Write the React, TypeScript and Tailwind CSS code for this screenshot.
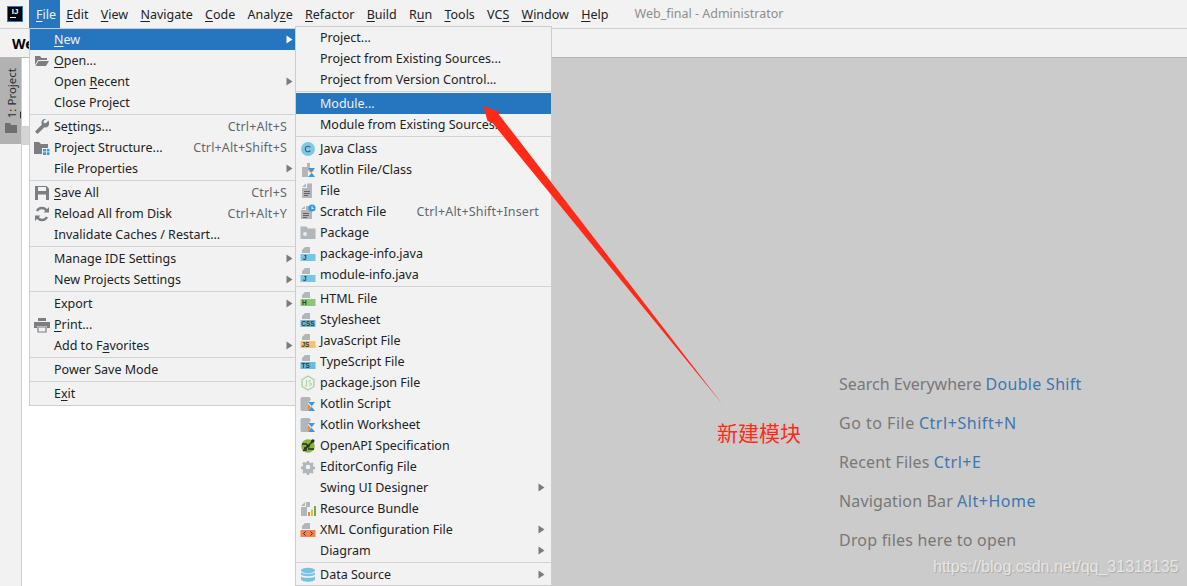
import React from "react";

const FONT = "font-['Noto_Sans','Open_Sans',sans-serif]";

function Label({ t }: { t: string }) {
  const i = t.indexOf("&");
  if (i < 0) return <>{t}</>;
  return (
    <>
      {t.slice(0, i)}
      <u className="underline underline-offset-[2px] decoration-1">{t[i + 1]}</u>
      {t.slice(i + 2)}
    </>
  );
}

const Svg = ({ children }: { children: React.ReactNode }) => (
  <svg width="16" height="16" viewBox="0 0 16 16" className="block">{children}</svg>
);

const G = "#7c7f82";
const L = "#b0b6ba";

const Lines = () => <path d="M4 8h6v1H4zM4 10h6v1H4zM4 12h4v1H4z" fill="#5f6468" />;
const TopDoc = () => <path d="M5 1h5v6H2V4zM5 1v3H2z" fill={L} />;
const Band = ({ c, t, tc = "#30383d", x = 3 }: { c: string; t: string; tc?: string; x?: number }) => (
  <>
    <TopDoc />
    <rect x="0.5" y="8" width="15" height="7" fill={c} />
    <text x={x} y="14.4" fontSize="6.5" fontWeight="700" fontFamily="Liberation Sans" fill={tc}>{t}</text>
  </>
);
const KotlinMark = () => <path d="M8 15l4-4.5L8 6h7l-3.5 4.5L15 15z" fill="#2f9be8" />;

const icons: Record<string, React.ReactNode> = {
  open: <Svg><path d="M1 3h5l1.5 2H13v2H4L1 12z" fill={G} /><path d="M4.5 8H15l-3 5H1.5z" fill={G} /></Svg>,
  wrench: <Svg><path d="M14.5 1.5l-2.8 2.8-1.800-.4-.4-1.800L12.200 0c-2.600-.7-5.200 1.400-4.700 4.300.1.500.2.900.4 1.200L1 12.400 3.600 15 10.400 8.200c3 1.100 6-1.700 4.100-6.700z" fill={G} /></Svg>,
  structure: <Svg><path d="M0 2h5l2 2h7v4H8v6H0z" fill={G} /><path d="M9 9h3v2.500H9zM12.800 9H15.500v2.500H12.800zM9 12.300h3V15H9zM12.800 12.300H15.500V15H12.800z" fill="#389fd6" /></Svg>,
  save: <Svg><path d="M1 1h11.500L15 3.500V15H1z" fill={G} /><rect x="4" y="2" width="8" height="4" fill="#f2f2f2" /><rect x="4" y="9.500" width="8" height="5.500" fill="#f2f2f2" /></Svg>,
  reload: <Svg><g fill="none" stroke={G} strokeWidth="2.400"><path d="M13 5.500A5.500 5.500 0 0 0 3 5" /><path d="M3 10.500A5.500 5.500 0 0 0 13 11" /></g><path d="M9.500 6.500H15V1zM6.500 9.500H1V15z" fill={G} /></Svg>,
  print: <Svg><rect x="4" y="1" width="8" height="3" fill={G} /><path d="M0 5h16v6h-3V9H3v2H0z" fill={G} /><path d="M4 10h8v5H4z" fill="none" stroke={G} strokeWidth="1.200" /></Svg>,
  java: <Svg><circle cx="8" cy="8" r="7" fill="#7ec8e6" /><path d="M10.300 6.300A2.800 2.800 0 1 0 10.300 9.700" fill="none" stroke="#3f5f6e" strokeWidth="1.100" /></Svg>,
  kotlin: <Svg><path d="M2 5h5V1h3v7H8v7H2z" fill={L} /><path d="M8 15l3-4-3-3h6l-3 3z" fill="#f0862f" /><KotlinMark /></Svg>,
  file: <Svg><path d="M7 0.500h5V15H2V5h5z" fill={L} /><path d="M2 4l4-3.500V4z" fill={L} /><Lines /></Svg>,
  scratch: <Svg><path d="M6 2h4v2h2v11H1V6h5z" fill={L} /><path d="M1 5l4-3v3z" fill={L} /><path d="M3 9h6v1H3zM3 11h6v1H3zM3 13h4v1H3z" fill="#5f6468" /><circle cx="12" cy="4" r="3.600" fill="#2f9be8" /><path d="M11.600 2.200h.9v2h1.400v.9h-2.300z" fill="#fff" /></Svg>,
  pkg: <Svg><path d="M0.500 1.500h6l1.500 2h7.500V14H0.500z" fill={L} /><circle cx="5" cy="9" r="2" fill="#e8ebec" /></Svg>,
  jfile: <Svg><Band c="#78c6e6" t="J" x={3} /></Svg>,
  html: <Svg><Band c="#8fc476" t="H" x={2} /></Svg>,
  css: <Svg><Band c="#6cbce0" t="CSS" x={1.200} /></Svg>,
  js: <Svg><Band c="#f4c36e" t="JS" x={1.500} /></Svg>,
  ts: <Svg><Band c="#66bce3" t="TS" x={1.500} /></Svg>,
  node: <Svg><path d="M8 1l6 3.500v7L8 15l-6-3.500v-7z" fill="#eef3ea" stroke="#a9cfa4" strokeWidth="1.300" /><path d="M6.500 5v5q0 1.500-1.500 1.200M11 6q-2-1.200-2.200.3T11 8.500 8.800 10.600" fill="none" stroke="#a9cfa4" strokeWidth="1" /></Svg>,
  kscript: <Svg><path d="M1.500 1h8l1.500 2.500-3 3.500v8h-6q-1.500 0-1.500-1.500V2.500z" fill={L} /><KotlinMark /><path d="M8 15l3-4-3-3z" fill="#f0862f" /></Svg>,
  openapi: <Svg><circle cx="8" cy="8" r="6.800" fill="#85b82e" /><path d="M2 5h5v2H2zM8 10h6v2H8zM4 9h3v4H4z" fill="#3e4a3b" /><path d="M3 13L13 3" stroke="#2c2f2b" strokeWidth="1.400" /><circle cx="12.800" cy="3" r="1.800" fill="#2c2f2b" /><circle cx="8" cy="8" r="1.800" fill="#2c2f2b" /></Svg>,
  gear: <Svg><path d="M6.700 1h2.600l.4 2 1.300.6 1.800-1.100 1.800 1.800-1.100 1.800.6 1.300 2 .4v2.600l-2 .4-.6 1.300 1.100 1.800-1.800 1.800-1.800-1.100-1.300.6-.4 2H6.700l-.4-2-1.300-.6-1.800 1.100-1.800-1.800 1.100-1.800-.6-1.300-2-.4V7.400l2-.4.6-1.300-1.100-1.800 1.800-1.800L5 3.200l1.300-.6z" fill={L} transform="translate(1 1) scale(.875)" /><circle cx="8" cy="8" r="2.300" fill="#f2f2f2" /></Svg>,
  bundle: <Svg><path d="M1 5l4-4v4zM6 1h4v5H7v9H1V6h5z" fill={L} /><rect x="8" y="11" width="2" height="4" fill="#f0862f" /><rect x="11" y="8.500" width="2" height="6.500" fill="#e8b93b" /><rect x="14" y="5" width="2" height="10" fill="#6aab4f" /></Svg>,
  xml: <Svg><TopDoc /><rect x="0.500" y="8" width="15" height="7" fill="#ef8354" /><path d="M5.500 9.500L3.500 11.500l2 2M10.500 9.500l2 2-2 2" fill="none" stroke="#3a2a22" strokeWidth="1" /></Svg>,
  db: <Svg><ellipse cx="8" cy="3.500" rx="7" ry="2.700" fill="#76c2e3" /><path d="M1 5.200C2 7.200 14 7.200 15 5.200V7.500C14 9.700 2 9.700 1 7.500zM1 9.200C2 11.200 14 11.200 15 9.200V12.500C14 15.500 2 15.500 1 12.500z" fill="#76c2e3" /></Svg>,
};

type Item = { t: string; icon?: string; sc?: string; sub?: boolean; active?: boolean } | "sep";

const fileMenu: Item[] = [
  { t: "&New", sub: true, active: true },
  { t: "&Open...", icon: "open" },
  { t: "Open &Recent", sub: true },
  { t: "Close Project" },
  "sep",
  { t: "Se&ttings...", icon: "wrench", sc: "Ctrl+Alt+S" },
  { t: "Project Structure...", icon: "structure", sc: "Ctrl+Alt+Shift+S" },
  { t: "File Properties", sub: true },
  "sep",
  { t: "&Save All", icon: "save", sc: "Ctrl+S" },
  { t: "Reload All from Disk", icon: "reload", sc: "Ctrl+Alt+Y" },
  { t: "Invalidate Caches / Restart..." },
  "sep",
  { t: "Manage IDE Settings", sub: true },
  { t: "New Projects Settings", sub: true },
  "sep",
  { t: "Export", sub: true },
  { t: "&Print...", icon: "print" },
  { t: "Add to F&avorites", sub: true },
  "sep",
  { t: "Power Save Mode" },
  "sep",
  { t: "E&xit" },
];

const newMenu: Item[] = [
  { t: "Project..." },
  { t: "Project from Existing Sources..." },
  { t: "Project from Version Control..." },
  "sep",
  { t: "Module...", active: true },
  { t: "Module from Existing Sources..." },
  "sep",
  { t: "Java Class", icon: "java" },
  { t: "Kotlin File/Class", icon: "kotlin" },
  { t: "File", icon: "file" },
  { t: "Scratch File", icon: "scratch", sc: "Ctrl+Alt+Shift+Insert" },
  { t: "Package", icon: "pkg" },
  { t: "package-info.java", icon: "jfile" },
  { t: "module-info.java", icon: "jfile" },
  "sep",
  { t: "HTML File", icon: "html" },
  { t: "Stylesheet", icon: "css" },
  { t: "JavaScript File", icon: "js" },
  { t: "TypeScript File", icon: "ts" },
  { t: "package.json File", icon: "node" },
  { t: "Kotlin Script", icon: "kscript" },
  { t: "Kotlin Worksheet", icon: "kscript" },
  { t: "OpenAPI Specification", icon: "openapi" },
  { t: "EditorConfig File", icon: "gear" },
  { t: "Swing UI Designer", sub: true },
  { t: "Resource Bundle", icon: "bundle" },
  { t: "XML Configuration File", icon: "xml", sub: true },
  { t: "Diagram", sub: true },
  "sep",
  { t: "Data Source", icon: "db", sub: true },
];

function MenuRows({ items, wide }: { items: Item[]; wide?: boolean }) {
  return (
    <>
      {items.map((it, i) =>
        it === "sep" ? (
          <div key={i} className="h-[3px] flex items-center"><div className="h-px w-full bg-[#d2d2d2]" /></div>
        ) : (
          <div
            key={i}
            className={`relative h-[21px] flex items-center pl-[24px] pt-[2px] whitespace-nowrap ${wide ? "pr-[12px]" : "pr-[8px]"} ${it.active ? "bg-[#2675bf] text-[#f0f0f0]" : "text-[#1c2226]"}`}
          >
            {it.icon && <span className="absolute left-[4px] top-[3px]">{icons[it.icon]}</span>}
            <span><Label t={it.t} /></span>
            {it.sc && <span className="ml-auto text-[#5f6871] tracking-[0.15px]">{it.sc}</span>}
            {it.sub && (
              <svg width="7" height="9" viewBox="0 0 7 9" className={`absolute top-[6px] ${wide ? "right-[6px]" : "right-[2px]"}`}>
                <path d="M0.500 0.500L6.500 4.500L0.500 8.500z" fill={it.active ? "#ffffff" : "#7b7b7b"} />
              </svg>
            )}
          </div>
        )
      )}
    </>
  );
}

const bar = ["&Edit", "&View", "&Navigate", "&Code", "Analy&ze", "&Refactor", "&Build", "R&un", "&Tools", "VC&S", "&Window", "&Help"];

export default function App() {
  return (
    <div className={`relative w-[1187px] h-[586px] overflow-hidden bg-[#f2f2f2] text-[12.5px] ${FONT}`}>
      <div className="h-[29px] flex items-center border-b border-[#cfcfcf] text-[#1c2226]">
        <div className="ml-[7px] mr-[6px] w-[16px] h-[16px] bg-black border border-[#2675bf] flex flex-col items-center shrink-0">
          <span className="text-white text-[8px] leading-[9px] font-bold font-['Liberation_Sans',sans-serif]">IJ</span>
          <span className="w-[6px] h-px bg-white mt-[1px] self-start ml-[2px]" />
        </div>
        <div className="h-[28px] w-[31px] pl-[7px] pt-[2px] flex items-center bg-[#2675bf] text-[#eef2f6]">
          <span><Label t="&File" /></span>
        </div>
        {bar.map((b) => (
          <div key={b} className="h-[28px] px-[6.14px] pt-[2px] flex items-center">
            <span><Label t={b} /></span>
          </div>
        ))}
        <span className="ml-[20px] text-[#8e8e8e] pt-px">Web_final - Administrator</span>
      </div>

      <div className="h-[29px] flex items-center pl-[12px] border-b border-[#b6b6b6] font-bold text-[14px] text-black">
        We
      </div>

      <div className="flex h-[529px]">
        <div className="w-[22px] border-r border-[#cfcfcf] bg-[#f2f2f2] shrink-0">
          <div className="h-[86px] w-[21px] bg-[#b2b2b2] flex flex-col items-center pt-[10px] gap-[5px] text-[#2b2f33] text-[11.5px]">
            <span className="[writing-mode:vertical-rl] rotate-180 leading-[21px] pr-[2px]"><u className="underline underline-offset-[2px]">1</u>: Project</span>
            <svg width="12" height="10" viewBox="0 0 12 10" className="shrink-0"><path d="M0 0h5l1 2h6v8H0z" fill="#6e6e6e" /></svg>
          </div>
        </div>
        <div className="w-[273px] bg-white shrink-0 pt-[68px]">
          <div className="h-[19px] bg-[#d4d4d4]" />
        </div>
        <div className="flex-1 bg-[#cbcbcb] pl-[544px] pt-[307px] text-[16px] text-[#787878] leading-[39px] whitespace-nowrap">
          <div>Search Everywhere <span className="text-[#3e76b0] tracking-[0.3px]">Double Shift</span></div>
          <div><span className="tracking-[0.5px]">Go to File</span> <span className="text-[#3e76b0] tracking-[0.55px]">Ctrl+Shift+N</span></div>
          <div><span className="tracking-[0.15px]">Recent Files</span> <span className="text-[#3e76b0] tracking-[0.5px]">Ctrl+E</span></div>
          <div><span className="tracking-[0.15px]">Navigation Bar</span> <span className="text-[#3e76b0] tracking-[0.5px]">Alt+Home</span></div>
          <div className="tracking-[0.2px]">Drop files here to open</div>
        </div>
      </div>

      <div className="absolute left-[29px] top-[28px] w-[267px] bg-[#f2f2f2] border border-[#cdcdcd] pb-px">
        <MenuRows items={fileMenu} />
      </div>

      <div className="absolute left-[295px] top-[26px] w-[257px] bg-[#f2f2f2] border border-[#cdcdcd]">
        <MenuRows items={newMenu} wide />
      </div>

      <svg width="1187" height="586" viewBox="0 0 1187 586" className="absolute left-0 top-0 pointer-events-none">
        <path d="M483.300 106L499.500 112L498.500 114L722 403.800L492.500 123L487.500 121z" fill="#ff2a17" />
      </svg>

      <div className="absolute left-[717px] top-[417px] text-[21px] leading-[30px] text-[#ff2a17] font-['Noto_Sans_CJK_SC',sans-serif]">新建模块</div>

      <div className="absolute left-[933px] top-[557px] text-[16px] leading-[20px] text-[#e6e6e6] font-['Liberation_Sans',sans-serif] [text-shadow:1px_1px_1px_#a8a8a8]">https://blog.csdn.net/qq_31318135</div>
    </div>
  );
}
